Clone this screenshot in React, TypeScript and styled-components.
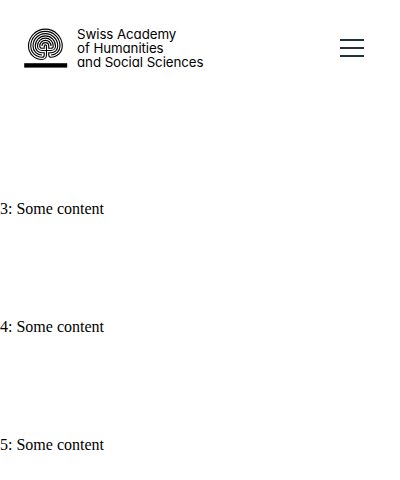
import React from "react";
import styled, { createGlobalStyle } from "styled-components";

const GlobalStyle = createGlobalStyle`
  body {
    margin: 0;
    background: #fff;
    color: #000;
    font: 16px/18px "Liberation Serif", "Times New Roman", serif;
  }
`;

const Page = styled.div`
  height: 480px;
  overflow: hidden;
`;

const Header = styled.header`
  display: flex;
  justify-content: space-between;
  align-items: flex-start;
  height: 100px;
  box-sizing: border-box;
  padding: 24px 36px 0 24px;
`;

const Brand = styled.a`
  display: flex;
  gap: 9px;
  color: #000;
  text-decoration: none;
`;

const Emblem = styled.svg`
  display: block;
  width: 44px;
  height: 44px;
`;

const BrandName = styled.div`
  padding-top: 3px;
  font-family: Inter, "Liberation Sans", sans-serif;
  font-size: 13.3px;
  font-weight: 420;
  line-height: 14.2px;
  font-feature-settings: "cv11";
`;

const BrandLine = styled.span<{ $tracking: number }>`
  display: block;
  white-space: nowrap;
  letter-spacing: ${(p) => p.$tracking}px;
`;

const MenuButton = styled.button`
  display: flex;
  flex-direction: column;
  gap: 6px;
  width: 24px;
  margin: 15px 0 0;
  padding: 0;
  border: 0;
  background: none;
`;

const MenuBar = styled.span`
  height: 2px;
  background: #1e3246;
`;

const Content = styled.main`
  display: flex;
  flex-direction: column;
  gap: 100px;
  padding-top: 100px;
`;

const Entry = styled.div`
  height: 18px;
`;

const Labyrinth = () => (
  <Emblem viewBox="0 0 44 44" aria-hidden="true">
    <g
      transform="translate(22.5 26.5) scale(1.125)"
      fill="none"
      stroke="#000"
      strokeWidth="1"
    >
      <path d="M0-4V4M-4 0H4" />
      <path d="M-2-4V-2H-4M2-4V-2H4M-4 2H-2V4M4 2H2V4" />
      <path d="M-2-4A1 1 0 0 1 0-4" />
      <path d="M-4-4A3 3 0 0 1 2-4" />
      <path d="M-4-2A2 2 0 0 1-6-4A5 5 0 0 1 4-4" />
      <path d="M-4 0A4 4 0 0 1-8-4A7 7 0 0 1 6-4A2 2 0 0 1 4-2" />
      <path d="M-4 2A6 6 0 0 1-10-4A9 9 0 0 1 8-4A4 4 0 0 1 4 0" />
      <path d="M-4 4A8 8 0 0 1-12-4A11 11 0 0 1 10-4A6 6 0 0 1 4 2" />
      <path d="M-2 4A2 2 0 0 1-4 6A10 10 0 0 1-14-4A13 13 0 0 1 12-4A8 8 0 0 1 4 4" />
      <path d="M0 4A4 4 0 0 1-4 8A12 12 0 0 1-16-4A15 15 0 0 1 14-4A10 10 0 0 1 4 6A2 2 0 0 1 2 4" />
    </g>
    <rect x="0.2" y="39.2" width="43" height="4.4" fill="#000" />
  </Emblem>
);

export default function App() {
  return (
    <Page>
      <GlobalStyle />
      <Header>
        <Brand>
          <Labyrinth />
          <BrandName>
            <BrandLine $tracking={-0.07}>Swiss Academy</BrandLine>
            <BrandLine $tracking={-0.08}>of Humanities</BrandLine>
            <BrandLine $tracking={-0.06}>and Social Sciences</BrandLine>
          </BrandName>
        </Brand>
        <MenuButton aria-label="Menu">
          <MenuBar />
          <MenuBar />
          <MenuBar />
        </MenuButton>
      </Header>
      <Content>
        {[3, 4, 5].map((n) => (
          <Entry key={n}>{n}: Some content</Entry>
        ))}
      </Content>
    </Page>
  );
}
